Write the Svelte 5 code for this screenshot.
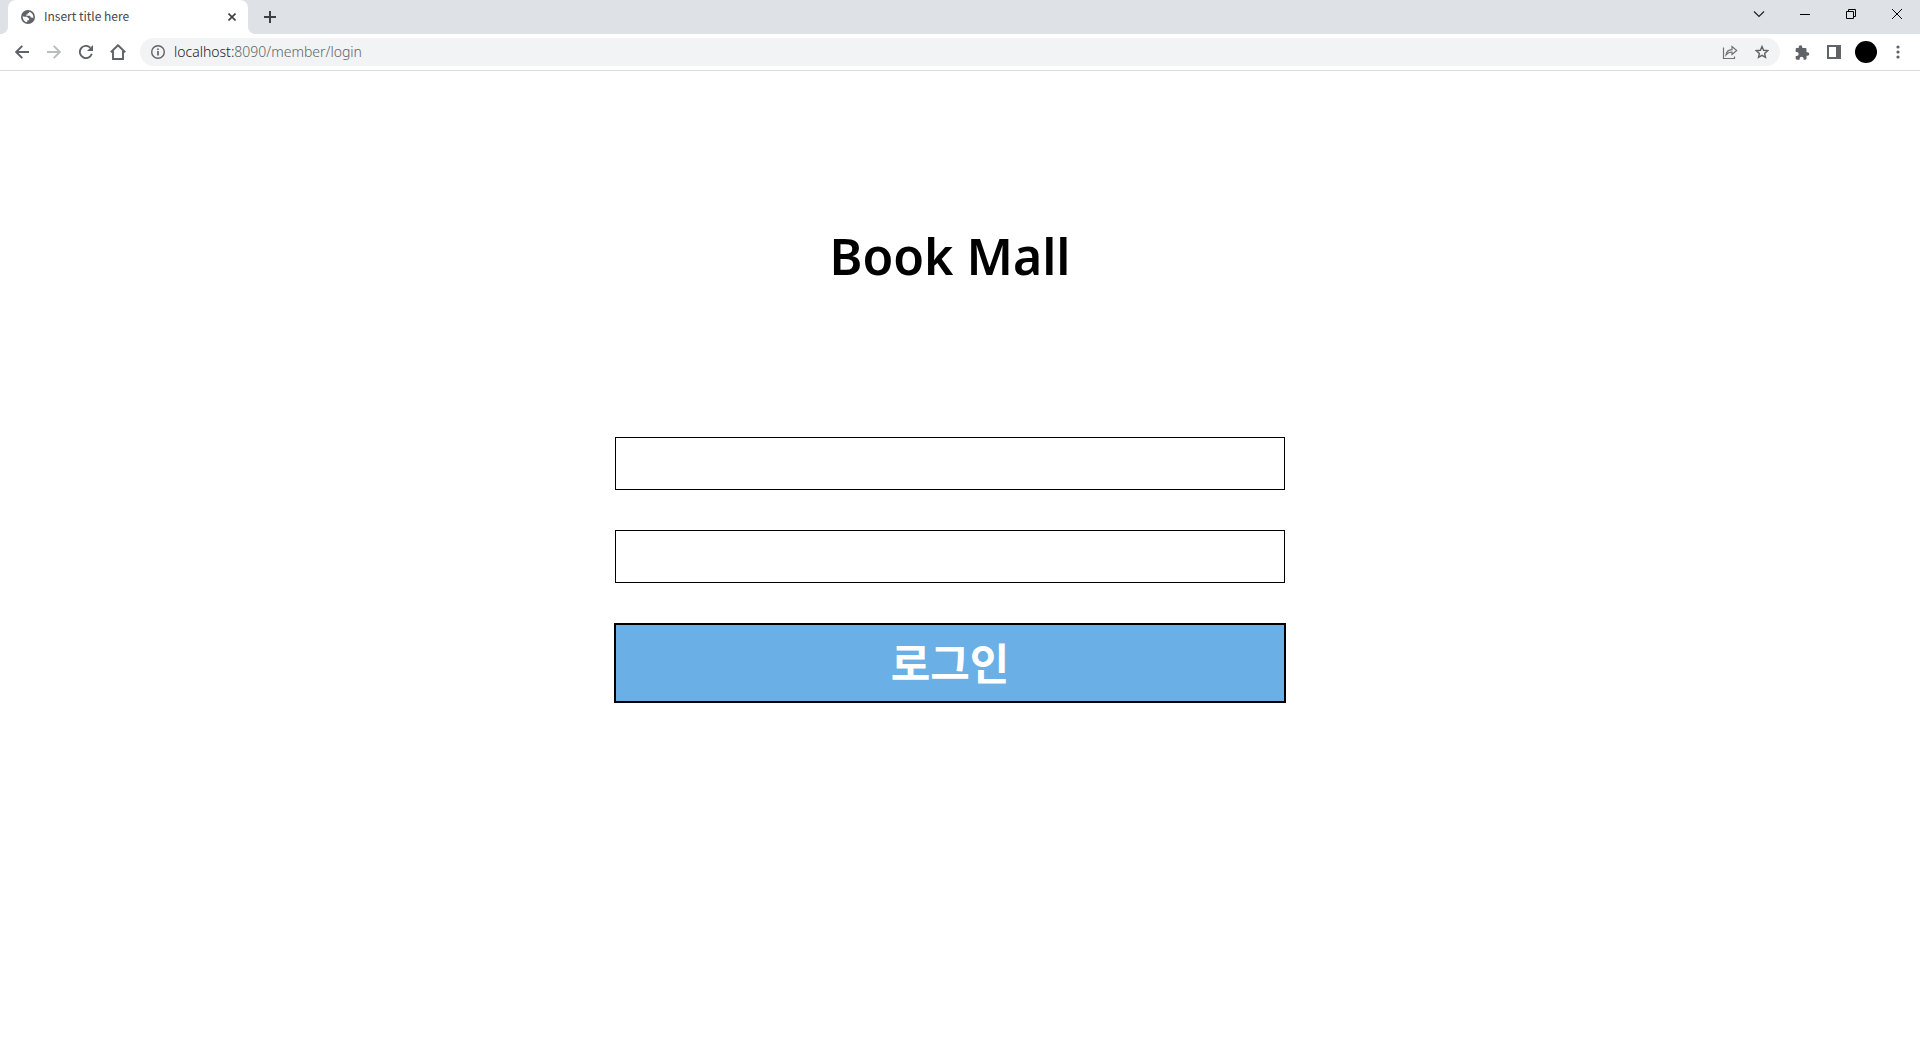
<script>
  let userId = "";
  let userPw = "";
</script>

<div class="browser">
  <header>
    <div class="tab-strip">
      <div class="tab">
        <svg class="favicon" width="14" height="14" viewBox="0 0 14 14" aria-hidden="true">
          <circle cx="7" cy="7" r="7" fill="#5f6368" />
          <path d="M8.3 1.7c-.2 1-.7 1.5-1.7 1.6v1.2H5.3v1.2h3.4c.5 0 .8.3.8.8v.9h1.2c.7 0 1.1.3 1.5.8A5.4 5.4 0 0 0 8.3 1.7z" fill="#fff" />
          <path d="M1.7 6.2c1.5.4 2.6.5 3.7.5 1 0 1.5.6 1.5 1.5h1.2v2H6.3v2.1A5.4 5.4 0 0 1 1.7 6.2z" fill="#fff" />
        </svg>
        <span class="tab-title">Insert title here</span>
        <button class="tab-close" aria-label="Close tab">
          <svg width="8" height="8" viewBox="0 0 8 8"><path d="M.5.5l7 7M7.5.5l-7 7" stroke="#3c4043" stroke-width="1.6" /></svg>
        </button>
      </div>
      <button class="new-tab" aria-label="New tab">
        <svg width="12" height="12" viewBox="0 0 12 12"><path d="M6 0v12M0 6h12" stroke="#3c4043" stroke-width="2" /></svg>
      </button>
      <div class="window-buttons">
        <button aria-label="Search tabs">
          <svg width="12" height="12" viewBox="0 0 12 12"><path d="M1 3.500l5 5 5-5" stroke="#222" stroke-width="1.200" fill="none" /></svg>
        </button>
        <button aria-label="Minimize">
          <svg width="10" height="10" viewBox="0 0 10 10"><path d="M0 5.500h10" stroke="#000" /></svg>
        </button>
        <button aria-label="Restore">
          <svg width="10" height="10" viewBox="0 0 10 10"><path d="M.5 2.500h7v7h-7zM2.500 2.500v-2h7v7h-2" stroke="#000" fill="none" /></svg>
        </button>
        <button aria-label="Close">
          <svg width="10" height="10" viewBox="0 0 10 10"><path d="M0 0l10 10M10 0L0 10" stroke="#000" /></svg>
        </button>
      </div>
    </div>

    <div class="toolbar">
      <button aria-label="Back">
        <svg width="14" height="14" viewBox="0 0 14 14"><path d="M14 7H1.500M7.300.8L1.200 7l6.100 6.200" stroke="#5f6368" stroke-width="1.900" fill="none" /></svg>
      </button>
      <button aria-label="Forward">
        <svg width="14" height="14" viewBox="0 0 14 14"><path d="M0 7h12.500M6.700.8L12.800 7l-6.100 6.200" stroke="#babcbe" stroke-width="1.900" fill="none" /></svg>
      </button>
      <button aria-label="Reload">
        <svg width="14" height="14" viewBox="0 0 14 14">
          <path d="M12.800 8.800a6.100 6.100 0 1 1-1.500-6.100" stroke="#5f6368" stroke-width="1.900" fill="none" />
          <path d="M14 0v6H8z" fill="#5f6368" />
        </svg>
      </button>
      <button aria-label="Home">
        <svg width="16" height="16" viewBox="0 0 16 16"><path d="M.8 8.200L8 1.200l7.200 7M3 7v8h10V7" stroke="#5f6368" stroke-width="1.900" fill="none" /></svg>
      </button>
      <div class="omnibox">
        <button aria-label="Site information">
          <svg width="14" height="14" viewBox="0 0 14 14">
            <circle cx="7" cy="7" r="6.300" stroke="#5f6368" stroke-width="1.400" fill="none" />
            <path d="M7 6v4.400M7 3.400v1.500" stroke="#5f6368" stroke-width="1.700" />
          </svg>
        </button>
        <a class="url" href="#login"><span class="host">localhost:</span>8090/member/login</a>
        <button aria-label="Share">
          <svg width="16" height="14" viewBox="0 0 16 14"><path d="M1.500 2.500v11h11v-2M4 10c.4-3.300 2.400-5.100 6-5.300V1.500L14.700 5.500 10 9.500V7c-2.600 0-4.400.9-6 3z" stroke="#6e7276" stroke-width="1.200" fill="none" /></svg>
        </button>
        <button aria-label="Bookmark this page">
          <svg width="14" height="14" viewBox="0 0 14 14"><path d="M7 1.500l1.600 3.800 4.100.4-3.100 2.700.9 4L7 10.300l-3.500 2.100.9-4L1.300 5.700l4.100-.4z" stroke="#5f6368" stroke-width="1.400" fill="none" /></svg>
        </button>
      </div>
      <button aria-label="Extensions">
        <svg width="15" height="15" viewBox="0 0 15 15"><path d="M12.500 7.200h-1V4.200c0-.7-.5-1.200-1.200-1.200h-3V2a1.800 1.800 0 0 0-3.600 0v1H1.900C1.200 3 .7 3.500.7 4.200v2.700h1a2 2 0 0 1 0 4h-1v2.700c0 .7.5 1.200 1.200 1.200h2.700v-1a2 2 0 0 1 4 0v1h1.700c.7 0 1.200-.5 1.200-1.200v-2.800h1a1.800 1.800 0 0 0 0-3.600z" fill="#5f6368" /></svg>
      </button>
      <button aria-label="Side panel">
        <svg width="14" height="14" viewBox="0 0 14 14"><path d="M0 0h14v14H0zM2 2v10h7V2z" fill="#5f6368" fill-rule="evenodd" /></svg>
      </button>
      <button aria-label="Profile"><span class="avatar"></span></button>
      <button aria-label="Menu">
        <svg width="4" height="14" viewBox="0 0 4 14" fill="#5f6368"><circle cx="2" cy="2" r="1.600" /><circle cx="2" cy="7" r="1.600" /><circle cx="2" cy="12" r="1.600" /></svg>
      </button>
    </div>
  </header>

  <main>
    <h1>Book Mall</h1>
    <form on:submit|preventDefault>
      <input type="text" aria-label="아이디" bind:value={userId} />
      <input type="password" aria-label="비밀번호" bind:value={userPw} />
      <button class="login" type="submit">로그인</button>
    </form>
  </main>
</div>

<style>
  :global(body) {
    margin: 0;
    background: #fff;
  }

  .browser {
    font-family: "Noto Sans", "Noto Sans CJK KR", sans-serif;
  }

  button {
    display: flex;
    align-items: center;
    justify-content: center;
    padding: 0;
    border: none;
    background: none;
  }

  .tab-strip {
    display: flex;
    height: 34px;
    padding-left: 8px;
    background: #dee1e6;
  }

  .tab {
    position: relative;
    display: flex;
    align-items: center;
    box-sizing: border-box;
    width: 240px;
    height: 34px;
    padding: 0 8px 0 13px;
    border-radius: 8px 8px 0 0;
    background: #fff;
  }

  /* curved feet on both sides of the active tab */
  .tab::before,
  .tab::after {
    content: "";
    position: absolute;
    bottom: 0;
    width: 8px;
    height: 8px;
  }

  .tab::before {
    left: -8px;
    background: radial-gradient(circle at 0 0, #dee1e6 8px, #fff 8px);
  }

  .tab::after {
    right: -8px;
    background: radial-gradient(circle at 100% 0, #dee1e6 8px, #fff 8px);
  }

  .tab-title {
    flex: 1;
    margin-left: 9px;
    padding-bottom: 2px;
    font-family: "Noto Sans CJK KR", sans-serif;
    font-size: 12px;
    line-height: 16px;
    color: #45484c;
  }

  .tab-close {
    width: 16px;
    height: 16px;
  }

  .new-tab {
    width: 28px;
    height: 28px;
    margin: 0 8px;
    align-self: center;
  }

  .window-buttons {
    display: flex;
    margin-left: auto;
  }

  .window-buttons button {
    width: 46px;
    height: 28px;
  }

  .toolbar {
    display: flex;
    align-items: center;
    height: 36px;
    padding: 0 6px;
    border-bottom: 1px solid #dadce0;
    background: #fff;
  }

  .toolbar button {
    width: 32px;
    height: 28px;
  }

  .omnibox {
    display: flex;
    flex: 1;
    align-items: center;
    height: 28px;
    margin: 0 6px;
    padding: 0 2px;
    border-radius: 14px;
    background: #f1f3f4;
  }

  .url {
    flex: 1;
    font-size: 14px;
    font-weight: 300;
    line-height: 20px;
    color: #5f6368;
    text-decoration: none;
  }

  .host {
    color: #202124;
  }

  .avatar {
    width: 22px;
    height: 22px;
    border-radius: 50%;
    background: #000;
  }

  main {
    display: flex;
    flex-direction: column;
    align-items: center;
    padding: 150px 20px 0 0;
  }

  h1 {
    margin: 0;
    font-size: 50px;
    font-weight: 600;
    line-height: 70px;
    color: #000;
  }

  form {
    display: flex;
    flex-direction: column;
    align-items: center;
    gap: 40px;
    width: 100%;
    max-width: 672px;
    margin-top: 146px;
  }

  input {
    box-sizing: border-box;
    width: calc(100% - 2px);
    height: 53px;
    padding: 0 10px;
    border: 1px solid #000;
    background: #fff;
    font-size: 30px;
    outline: none;
  }

  .login {
    width: 100%;
    height: 80px;
    padding-bottom: 4px;
    border: 2px solid #000;
    background: #6aafe6;
    font-family: "Noto Sans CJK KR", sans-serif;
    font-size: 43px;
    font-weight: 700;
    line-height: 60px;
    color: #fff;
  }
</style>
